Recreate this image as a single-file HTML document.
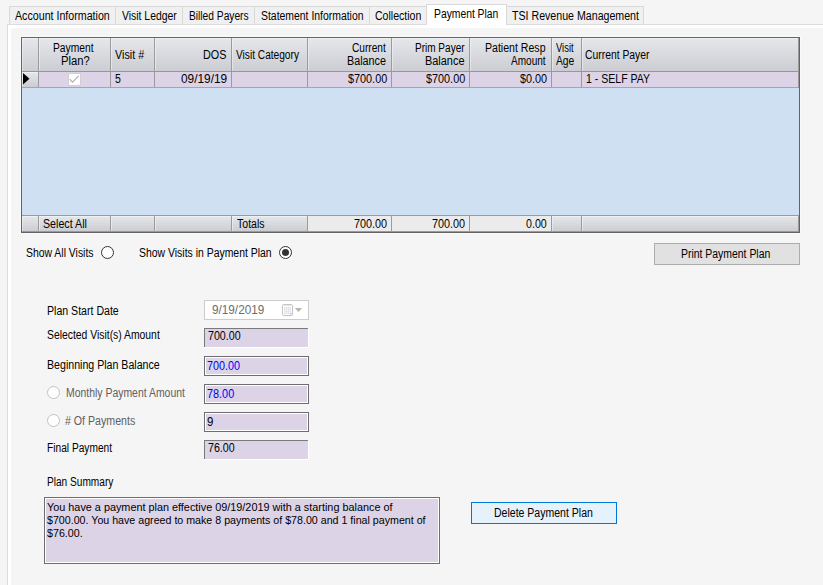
<!DOCTYPE html>
<html><head><meta charset="utf-8"><title>Payment Plan</title>
<style>
html,body{margin:0;padding:0;}
body{width:823px;height:585px;overflow:hidden;background:#f5f5f5;font-family:"Liberation Sans",sans-serif;font-size:12px;color:#000;position:relative;}
div,span,svg{position:absolute;box-sizing:border-box;}
.x{white-space:nowrap;line-height:14px;transform-origin:0 0;}
.tab{top:6px;height:19px;border:1px solid #d9d9d9;border-bottom:none;background:#f0f0f0;}
.hc{background:linear-gradient(#e5e7eb,#cbcdd2);box-shadow:inset 1px 1px 0 rgba(255,255,255,.4);}
.rh{background:linear-gradient(#e5e7eb,#cbcdd2);box-shadow:inset 1px 1px 0 rgba(255,255,255,.4);}
.rc{background:#dcd3e6;}
.fc{background:linear-gradient(#e5e7eb,#cbcdd2);box-shadow:inset 1px 1px 0 rgba(255,255,255,.4);}
.ff{background:#ebebeb;}
.vs{width:1px;background:#9b9b9b;}
.hl{height:1px;background:#9b9b9b;left:22px;width:776px;}
.fld{background:#dcd3e6;}
.f3d{border:1px solid #6e6e6e;box-shadow:inset 0 0 0 1px #fff;}
.fsk{border-top:1px solid #7a7a7a;border-left:1px solid #7a7a7a;box-shadow:1px 1px 0 #fff;}
.rad{width:13px;height:13px;border-radius:50%;}
</style></head><body>

<!-- tabs -->
<div class="tab" style="left:9px;width:107px;"></div>
<div class="tab" style="left:115px;width:68px;"></div>
<div class="tab" style="left:182px;width:73px;"></div>
<div class="tab" style="left:254px;width:116px;"></div>
<div class="tab" style="left:369px;width:59px;"></div>
<div class="tab" style="left:506px;width:138px;"></div>
<div style="left:7px;top:24px;width:830px;height:600px;border:1px solid #dcdcdc;background:#fff;"></div>
<div style="left:11px;top:28px;width:830px;height:600px;background:#f5f5f5;"></div>
<div class="tab" style="left:426px;width:81px;top:4px;height:21px;background:#fff;"></div>

<!-- grid -->
<div style="left:21px;top:37px;width:779px;height:196px;border:1px solid #646464;background:#cfe0f3;box-shadow:0 0 0 1px #fafafa;"></div>
<div style="left:798px;top:38px;width:1px;height:50px;background:#9a9a9a;"></div>
<div style="left:798px;top:215px;width:1px;height:17px;background:#9a9a9a;"></div>
<div style="left:22px;top:231px;width:777px;height:1px;background:#9a9a9a;"></div>
<div class="hc" style="left:22px;top:38px;width:16px;height:33px;"></div>
<div class="rh" style="left:22px;top:72px;width:16px;height:15px;"></div>
<div class="fc" style="left:22px;top:216px;width:16px;height:15px;"></div>
<div class="hc" style="left:39px;top:38px;width:71px;height:33px;"></div>
<div class="rc" style="left:39px;top:72px;width:71px;height:15px;"></div>
<div class="fc" style="left:39px;top:216px;width:71px;height:15px;"></div>
<div class="hc" style="left:111px;top:38px;width:43px;height:33px;"></div>
<div class="rc" style="left:111px;top:72px;width:43px;height:15px;"></div>
<div class="fc" style="left:111px;top:216px;width:43px;height:15px;"></div>
<div class="hc" style="left:155px;top:38px;width:76px;height:33px;"></div>
<div class="rc" style="left:155px;top:72px;width:76px;height:15px;"></div>
<div class="fc" style="left:155px;top:216px;width:76px;height:15px;"></div>
<div class="hc" style="left:232px;top:38px;width:75px;height:33px;"></div>
<div class="rc" style="left:232px;top:72px;width:75px;height:15px;"></div>
<div class="fc" style="left:232px;top:216px;width:75px;height:15px;"></div>
<div class="hc" style="left:308px;top:38px;width:83px;height:33px;"></div>
<div class="rc" style="left:308px;top:72px;width:83px;height:15px;"></div>
<div class="ff" style="left:308px;top:216px;width:83px;height:15px;"></div>
<div class="hc" style="left:392px;top:38px;width:77px;height:33px;"></div>
<div class="rc" style="left:392px;top:72px;width:77px;height:15px;"></div>
<div class="ff" style="left:392px;top:216px;width:77px;height:15px;"></div>
<div class="hc" style="left:470px;top:38px;width:81px;height:33px;"></div>
<div class="rc" style="left:470px;top:72px;width:81px;height:15px;"></div>
<div class="ff" style="left:470px;top:216px;width:81px;height:15px;"></div>
<div class="hc" style="left:552px;top:38px;width:29px;height:33px;"></div>
<div class="rc" style="left:552px;top:72px;width:29px;height:15px;"></div>
<div class="fc" style="left:552px;top:216px;width:29px;height:15px;"></div>
<div class="hc" style="left:582px;top:38px;width:216px;height:33px;"></div>
<div class="rc" style="left:582px;top:72px;width:216px;height:15px;"></div>
<div class="fc" style="left:582px;top:216px;width:216px;height:15px;"></div>
<div class="vs" style="left:38px;top:38px;height:49px;"></div>
<div class="vs" style="left:38px;top:216px;height:15px;"></div>
<div class="vs" style="left:110px;top:38px;height:49px;"></div>
<div class="vs" style="left:110px;top:216px;height:15px;"></div>
<div class="vs" style="left:154px;top:38px;height:49px;"></div>
<div class="vs" style="left:154px;top:216px;height:15px;"></div>
<div class="vs" style="left:231px;top:38px;height:49px;"></div>
<div class="vs" style="left:231px;top:216px;height:15px;"></div>
<div class="vs" style="left:307px;top:38px;height:49px;"></div>
<div class="vs" style="left:307px;top:216px;height:15px;"></div>
<div class="vs" style="left:391px;top:38px;height:49px;"></div>
<div class="vs" style="left:391px;top:216px;height:15px;"></div>
<div class="vs" style="left:469px;top:38px;height:49px;"></div>
<div class="vs" style="left:469px;top:216px;height:15px;"></div>
<div class="vs" style="left:551px;top:38px;height:49px;"></div>
<div class="vs" style="left:551px;top:216px;height:15px;"></div>
<div class="vs" style="left:581px;top:38px;height:49px;"></div>
<div class="vs" style="left:581px;top:216px;height:15px;"></div>
<div class="hl" style="top:71px;background:#979797;"></div>
<div class="hl" style="top:87px;background:#a6a6a6;"></div>
<div class="hl" style="top:215px;"></div>
<svg style="left:23px;top:73px;" width="8" height="12" viewBox="0 0 8 12"><path d="M0 0 L6.5 5.75 L0 11.5 Z" fill="#000"/></svg>
<div style="left:68px;top:73px;width:13px;height:13px;background:#fff;border:1px solid #d0d0d0;"></div>
<svg style="left:68px;top:73px;" width="13" height="13" viewBox="0 0 13 13"><path d="M1.7 6.2 L4.4 9.2 L10.8 2.9" fill="none" stroke="#b0b0b0" stroke-width="1.2"/></svg>

<!-- radios -->
<div class="rad" style="left:101px;top:246px;border:1px solid #333;background:#fff;"></div>
<div class="rad" style="left:279px;top:246px;border:1px solid #333;background:#fff;"></div>
<div style="left:282px;top:249px;width:7px;height:7px;border-radius:50%;background:#333;"></div>

<!-- print button -->
<div style="left:654px;top:243px;width:146px;height:22px;border:1px solid #adadad;background:#e1e1e1;"></div>

<!-- form -->
<div style="left:204px;top:300px;width:105px;height:20px;border:1px solid #cccccc;background:#fff;"></div>
<svg style="left:281px;top:303px;" width="24" height="15" viewBox="0 0 24 15">
  <rect x="2.2" y="2.2" width="10" height="11.2" rx="1.2" fill="#ececec" opacity="0.6"/>
  <rect x="1.5" y="1.5" width="10" height="11" rx="1.3" fill="#fff" stroke="#cbc3c3"/>
  <rect x="3" y="4" width="7" height="7" fill="#e2e6ef"/>
  <path d="M3 2.6h7" stroke="#e0dcdc" stroke-width="0.8"/>
  <path d="M3.8 5.3h1M6 5.3h1M8.2 5.3h1M3.8 7.5h1M6 7.5h1M8.2 7.5h1M3.8 9.7h1M6 9.7h1M8.2 9.7h1" stroke="#fff" stroke-width="1"/>
  <path d="M9.5 12.5 L9.5 10.5 L11.5 10.5" fill="#f4f4f4" stroke="#cbc3c3" stroke-width="0.8"/>
  <path d="M13.9 5 L21.1 5 L17.5 9 Z" fill="#b6b6ac"/>
</svg>
<div class="fld fsk" style="left:204px;top:328px;width:104px;height:19px;"></div>
<div class="fld f3d" style="left:204px;top:356px;width:105px;height:20px;"></div>
<div class="rad" style="left:47px;top:386px;border:1px solid #c2c2c2;background:#fefefe;"></div>
<div class="fld f3d" style="left:204px;top:384px;width:105px;height:20px;"></div>
<div class="rad" style="left:47px;top:414px;border:1px solid #c2c2c2;background:#fefefe;"></div>
<div class="fld f3d" style="left:204px;top:412px;width:105px;height:20px;"></div>
<div class="fld fsk" style="left:204px;top:440px;width:104px;height:19px;"></div>
<div class="fld f3d" style="left:44px;top:497px;width:396px;height:67px;"></div>

<!-- delete button -->
<div style="left:471px;top:502px;width:146px;height:22px;border:1px solid #0078d7;background:#e5f1fb;"></div>

<!-- text -->
<span class="x" style="left:15.29px;top:9px;transform:scaleX(0.8883);">Account Information</span>
<span class="x" style="left:121.79px;top:9px;transform:scaleX(0.8667);">Visit Ledger</span>
<span class="x" style="left:188.85px;top:9px;transform:scaleX(0.8512);">Billed Payers</span>
<span class="x" style="left:261.05px;top:9px;transform:scaleX(0.8683);">Statement Information</span>
<span class="x" style="left:374.85px;top:9px;transform:scaleX(0.8793);">Collection</span>
<span class="x" style="left:434.02px;top:7px;transform:scaleX(0.8605);">Payment Plan</span>
<span class="x" style="left:511.50px;top:9px;transform:scaleX(0.8854);">TSI Revenue Management</span>
<span class="x" style="left:53.49px;top:41px;transform:scaleX(0.8556);">Payment</span>
<span class="x" style="left:60.63px;top:54px;transform:scaleX(0.9406);">Plan?</span>
<span class="x" style="left:115.09px;top:48px;transform:scaleX(0.8970);">Visit #</span>
<span class="x" style="left:203.25px;top:48px;transform:scaleX(0.9003);">DOS</span>
<span class="x" style="left:236.32px;top:48px;transform:scaleX(0.8454);">Visit Category</span>
<span class="x" style="left:352.11px;top:41px;transform:scaleX(0.8445);">Current</span>
<span class="x" style="left:347.35px;top:54px;transform:scaleX(0.8988);">Balance</span>
<span class="x" style="left:414.51px;top:41px;transform:scaleX(0.8349);">Prim Payer</span>
<span class="x" style="left:425.34px;top:54px;transform:scaleX(0.9107);">Balance</span>
<span class="x" style="left:485.34px;top:41px;transform:scaleX(0.8808);">Patient Resp</span>
<span class="x" style="left:510.87px;top:54px;transform:scaleX(0.8373);">Amount</span>
<span class="x" style="left:555.75px;top:41px;transform:scaleX(0.7826);">Visit</span>
<span class="x" style="left:555.75px;top:54px;transform:scaleX(0.8571);">Age</span>
<span class="x" style="left:584.86px;top:48px;transform:scaleX(0.8628);">Current Payer</span>
<span class="x" style="left:115.08px;top:72px;transform:scaleX(0.8745);">5</span>
<span class="x" style="left:180.97px;top:72px;transform:scaleX(0.9883);">09/19/19</span>
<span class="x" style="left:348.24px;top:72px;transform:scaleX(0.9037);">$700.00</span>
<span class="x" style="left:426.24px;top:72px;transform:scaleX(0.9037);">$700.00</span>
<span class="x" style="left:519.83px;top:72px;transform:scaleX(0.9044);">$0.00</span>
<span class="x" style="left:586.23px;top:72px;transform:scaleX(0.8784);">1 - SELF PAY</span>
<span class="x" style="left:42.96px;top:217px;transform:scaleX(0.8898);">Select All</span>
<span class="x" style="left:237.00px;top:217px;transform:scaleX(0.8790);">Totals</span>
<span class="x" style="left:353.97px;top:217px;transform:scaleX(0.9028);">700.00</span>
<span class="x" style="left:431.97px;top:217px;transform:scaleX(0.9028);">700.00</span>
<span class="x" style="left:525.76px;top:217px;transform:scaleX(0.8890);">0.00</span>
<span class="x" style="left:25.96px;top:246px;transform:scaleX(0.8679);">Show All Visits</span>
<span class="x" style="left:138.96px;top:246px;transform:scaleX(0.8696);">Show Visits in Payment Plan</span>
<span class="x" style="left:681.33px;top:247px;transform:scaleX(0.8693);">Print Payment Plan</span>
<span class="x" style="left:46.74px;top:304px;transform:scaleX(0.8818);">Plan Start Date</span>
<span class="x" style="left:212.00px;top:303px;transform:scaleX(0.9792);color:#6d6d6d;">9/19/2019</span>
<span class="x" style="left:46.69px;top:328px;transform:scaleX(0.8640);">Selected Visit(s) Amount</span>
<span class="x" style="left:208.01px;top:329px;transform:scaleX(0.8896);">700.00</span>
<span class="x" style="left:46.54px;top:358px;transform:scaleX(0.8845);">Beginning Plan Balance</span>
<span class="x" style="left:207.39px;top:359px;transform:scaleX(0.8972);color:#0000f0;">700.00</span>
<span class="x" style="left:65.88px;top:386px;transform:scaleX(0.8695);color:#606060;">Monthly Payment Amount</span>
<span class="x" style="left:207.17px;top:387px;transform:scaleX(0.9057);color:#0000f0;">78.00</span>
<span class="x" style="left:65.03px;top:414px;transform:scaleX(0.8851);color:#606060;"># Of Payments</span>
<span class="x" style="left:207.30px;top:415px;transform:scaleX(0.9530);">9</span>
<span class="x" style="left:46.65px;top:441px;transform:scaleX(0.8487);">Final Payment</span>
<span class="x" style="left:208.35px;top:441px;transform:scaleX(0.8883);">76.00</span>
<span class="x" style="left:46.66px;top:475px;transform:scaleX(0.8429);">Plan Summary</span>
<span class="x" style="left:46.69px;top:500px;transform:scaleX(0.9859);font-size:11px;">You have a payment plan effective 09/19/2019 with a starting balance of</span>
<span class="x" style="left:46.86px;top:513px;transform:scaleX(0.9687);font-size:11px;">$700.00. You have agreed to make 8 payments of $78.00 and 1 final payment of</span>
<span class="x" style="left:47.00px;top:526px;transform:scaleX(0.9722);font-size:11px;">$76.00.</span>
<span class="x" style="left:493.74px;top:506px;transform:scaleX(0.8771);">Delete Payment Plan</span>
</body></html>
